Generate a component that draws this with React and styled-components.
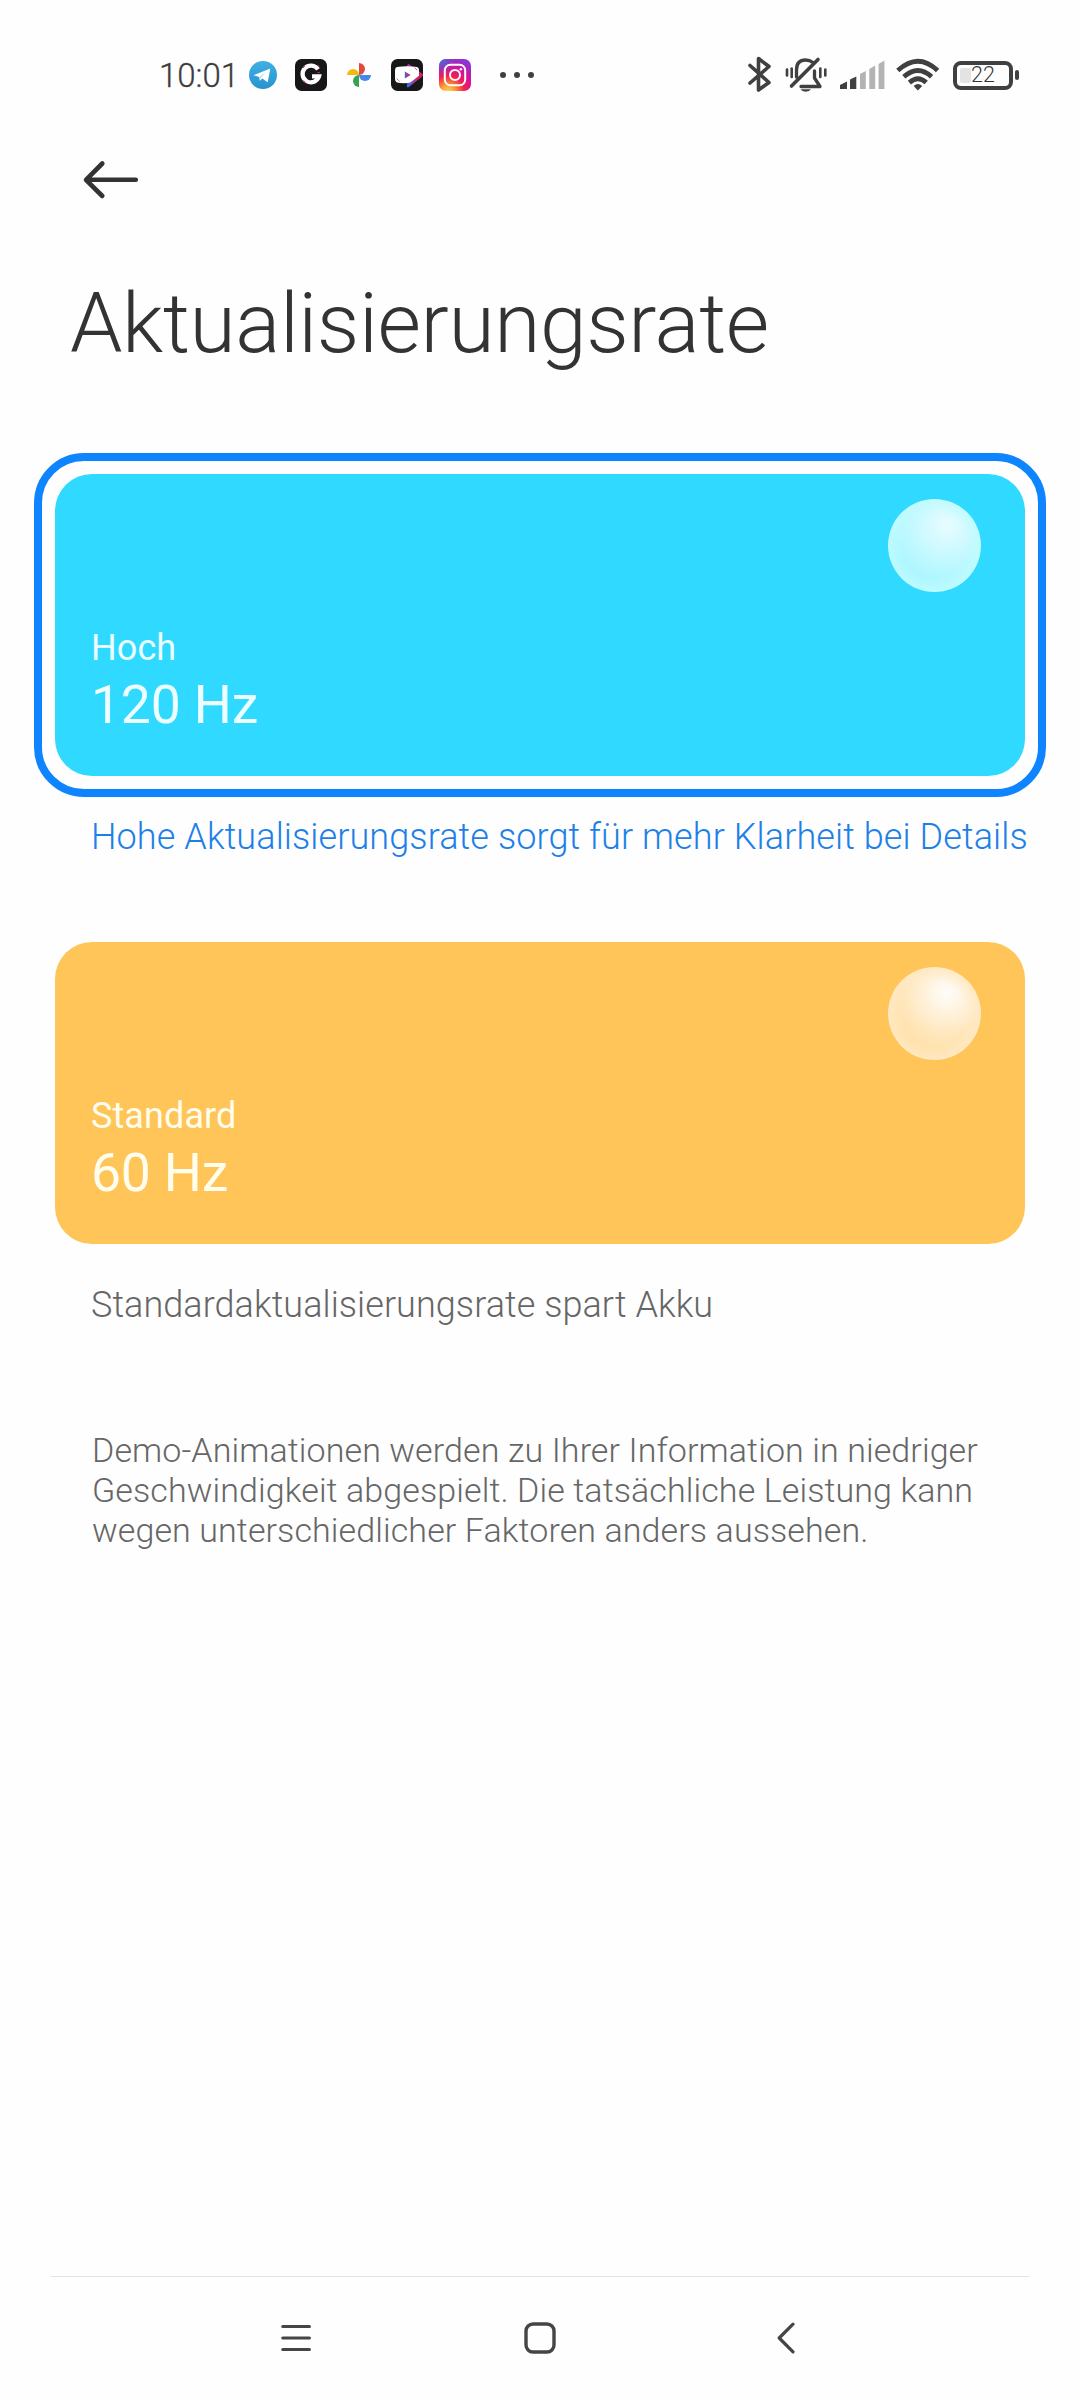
import React from "react";
import styled, { createGlobalStyle } from "styled-components";

const GlobalStyle = createGlobalStyle`
  body { margin: 0; background: #fefefe; }
  * { box-sizing: border-box; }
  svg { display: block; flex: none; }
`;

const Screen = styled.div`
  width: 1080px;
  height: 2400px;
  display: flex;
  flex-direction: column;
  background: #fefefe;
  font-family: Roboto, "Noto Sans", sans-serif;
  color: #333;
  overflow: hidden;
`;

const StatusBar = styled.div`
  height: 150px;
  padding: 0 61px 0 159px;
  display: flex;
  align-items: center;
  justify-content: space-between;
`;

const StatusGroup = styled.div`
  display: flex;
  align-items: center;
`;

const Clock = styled.span`
  width: 88px;
  padding-top: 1px;
  font-size: 33px;
  line-height: 40px;
  font-weight: 300;
  color: #3c3c3c;
  -webkit-text-stroke: 0.3px #3c3c3c;
  white-space: nowrap;
`;

const AppIcons = styled.div`
  display: flex;
  gap: 16px;
  align-items: center;
`;

const BatteryShell = styled.div`
  width: 60px;
  height: 29px;
  margin-left: 14px;
  border: 4px solid #404040;
  border-radius: 8px;
  display: flex;
  align-items: center;
  padding-left: 3px;
`;

const BatteryFill = styled.span`
  width: 11px;
  height: 15px;
  border-radius: 2px;
  background: #e3e3e3;
`;

const BatteryText = styled.span`
  font-size: 21.5px;
  line-height: 22px;
  font-weight: 300;
  color: #333;
`;

const BatteryNub = styled.span`
  width: 4px;
  height: 10px;
  margin-left: 2px;
  border-radius: 2px;
  background: #404040;
`;

const Toolbar = styled.div`
  height: 60px;
  padding-left: 81px;
  display: flex;
  align-items: center;
`;

const Title = styled.h1`
  margin: 64px 0 79px;
  padding-left: 70px;
  font-size: 84px;
  line-height: 100px;
  font-weight: 300;
  letter-spacing: -0.4px;
  white-space: nowrap;
`;

const Options = styled.div`
  padding: 0 34px;
  display: flex;
  flex-direction: column;
  gap: 63px;
`;

const Ring = styled.div`
  padding: 13px;
  border: 8px solid ${(p) => (p.$selected ? "#0f84ff" : "transparent")};
  border-radius: 50px;
`;

const Card = styled.div`
  height: 302px;
  padding: 25px 44px 40px 36px;
  border-radius: 37px;
  background: ${(p) => p.$color};
  display: flex;
  justify-content: space-between;
`;

const CardText = styled.div`
  display: flex;
  flex-direction: column;
  justify-content: flex-end;
  gap: 5px;
  color: ${(p) => p.$color};
`;

const CardName = styled.span`
  font-size: 36px;
  line-height: 42px;
  letter-spacing: 0.1px;
`;

const CardRate = styled.span`
  font-size: 53.5px;
  line-height: 62px;
  letter-spacing: -0.2px;
`;

const Ball = styled.div`
  width: 93px;
  height: 93px;
  border-radius: 50%;
  background:
    radial-gradient(circle at 50% 50%, transparent 50%, ${(p) => p.$edge} 72%) center / 100% 100%,
    radial-gradient(circle at 63% 28%, ${(p) => p.$light} 0, ${(p) => p.$mid} 45px, ${(p) => p.$base} 66px);
`;

const Caption = styled.div`
  margin: 19px 0 0 57px;
  font-size: 36px;
  line-height: 42px;
  font-weight: 300;
  letter-spacing: ${(p) => (p.$selected ? "0.1px" : "0.06px")};
  white-space: nowrap;
  color: ${(p) => (p.$selected ? "#1d80e8" : "#666")};
`;

const Note = styled.p`
  margin: 104px 60px 0 92px;
  font-size: 34px;
  line-height: 40px;
  font-weight: 300;
  letter-spacing: 0.1px;
  color: #666;
  white-space: nowrap;
`;

const NavBar = styled.nav`
  margin: auto 51px 0;
  height: 124px;
  border-top: 1px solid #e3e3e3;
  padding: 0 225px 1px 229px;
  display: flex;
  align-items: center;
  justify-content: space-between;
`;

const TelegramIcon = () => (
  <svg width="32" height="32" viewBox="0 0 32 32">
    <defs>
      <linearGradient id="tg" x1="0" y1="0" x2="0" y2="1">
        <stop offset="0" stopColor="#3fb0e4" />
        <stop offset="1" stopColor="#2793cf" />
      </linearGradient>
    </defs>
    <circle cx="16" cy="16" r="14" fill="url(#tg)" />
    <path d="M6.5 16.2 L23.3 9.5 L20.7 23.2 L15.3 19.4 L12.9 21.8 L12.2 18 Z" fill="#fff" />
    <path d="M12.3 18 L19.8 12.6 L14 18.6 L12.9 21.8 Z" fill="#b9dff2" />
  </svg>
);

const GIcon = () => (
  <svg width="32" height="32" viewBox="0 0 32 32">
    <rect width="32" height="32" rx="6.5" fill="#17171a" />
    <path d="M23 10.4 A8.4 8.4 0 1 0 24 17.4 L17 17.4" fill="none" stroke="#fff" strokeWidth="4.2" />
    <path d="M8 8.8 L9.8 7.2 M22.6 5.8 L24.6 8.2 M8.2 21.4 L11.4 24.8 M22 13.6 h3" stroke="#b3245f" strokeWidth="1" />
  </svg>
);

const PhotosIcon = () => (
  <svg width="32" height="32" viewBox="0 0 32 32">
    <path d="M16 16 V4 A6 6 0 0 1 16 16 Z" fill="#e04a3b" />
    <path d="M16 16 H28 A6 6 0 0 1 16 16 Z" fill="#4387f0" />
    <path d="M16 16 V28 A6 6 0 0 1 16 16 Z" fill="#36a353" />
    <path d="M16 16 H4 A6 6 0 0 1 16 16 Z" fill="#f6b90c" />
  </svg>
);

const VideoIcon = () => (
  <svg width="32" height="32" viewBox="0 0 32 32">
    <defs>
      <linearGradient id="vt" x1="1" y1="0" x2="0" y2="1">
        <stop offset="0" stopColor="#f0124a" />
        <stop offset="1" stopColor="#3a6cf0" />
      </linearGradient>
      <linearGradient id="vp" x1="0" y1="0" x2="1" y2="0">
        <stop offset="0" stopColor="#5560d0" />
        <stop offset="1" stopColor="#e8124a" />
      </linearGradient>
    </defs>
    <rect width="32" height="32" rx="6.5" fill="#17171a" />
    <path d="M16.5 6 L30.5 16 L16.5 26" fill="none" stroke="url(#vt)" strokeWidth="3" strokeLinejoin="round" />
    <path d="M6 8 Q16 6.4 26 8 Q28 8.4 28 11 L28 17 L20.5 23.6 Q12 25 6 23.6 Q4 23 4 20 L4 12 Q4 8.6 6 8 Z" fill="#fff" />
    <path d="M17 27 L28.5 18" stroke="url(#vt)" strokeWidth="2.6" strokeLinecap="round" />
    <path d="M13.8 12.4 L19.6 15.9 L13.8 19.4 Z" fill="url(#vp)" />
    <path d="M5.6 19.6 L8.6 22.4 M23.6 8.6 L26.4 11.4" stroke="#e0386a" strokeWidth="0.8" />
  </svg>
);

const InstagramIcon = () => (
  <svg width="32" height="32" viewBox="0 0 32 32">
    <defs>
      <radialGradient id="ig" cx="0.28" cy="1.05" r="1.1">
        <stop offset="0" stopColor="#ffe070" />
        <stop offset="0.22" stopColor="#fd9a30" />
        <stop offset="0.48" stopColor="#f2204f" />
        <stop offset="0.72" stopColor="#d312a0" />
        <stop offset="1" stopColor="#8a35d0" />
      </radialGradient>
      <radialGradient id="igb" cx="0.02" cy="0" r="0.55">
        <stop offset="0" stopColor="#3b70dc" />
        <stop offset="0.35" stopColor="#5a5cd4" stopOpacity="0.85" />
        <stop offset="1" stopColor="#9a35c0" stopOpacity="0" />
      </radialGradient>
    </defs>
    <rect width="32" height="32" rx="7" fill="url(#ig)" />
    <rect width="32" height="32" rx="7" fill="url(#igb)" />
    <rect x="5.8" y="5.8" width="20.4" height="20.4" rx="5.5" fill="none" stroke="#fff" strokeWidth="2" />
    <circle cx="16" cy="16" r="5" fill="none" stroke="#fff" strokeWidth="2" />
    <circle cx="21.9" cy="10.2" r="1.3" fill="#fff" />
  </svg>
);

const MoreDots = styled(({ className }) => (
  <svg className={className} width="34" height="8" viewBox="0 0 34 8" fill="#404040">
    <circle cx="3" cy="4" r="3" />
    <circle cx="17" cy="4" r="3" />
    <circle cx="31" cy="4" r="3" />
  </svg>
))`
  margin-left: 29px;
`;

const SystemIcons = () => (
  <svg width="192" height="40" viewBox="747 55 192 40" fill="none" stroke="#404040" strokeLinecap="round" strokeLinejoin="round">
    <path d="M750 65.5 L769 82.5 L758.5 90 V58.5 L769 66.5 L750 83" strokeWidth="3.6" />
    <g strokeWidth="3.3">
      <path d="M796.5 77 V70 C796.5 63 800 60 805.5 60 C809 60 811 61 813 62.5" />
      <path d="M814.5 71 V78 L820 86.5 H801" />
      <path d="M791.5 86 L818 59.5" strokeWidth="3.6" />
      <path d="M787 69.5 V75.5" strokeWidth="2.6" />
      <path d="M791.7 68.5 V77" strokeWidth="2.6" />
      <path d="M820.3 68.5 V77" strokeWidth="2.6" />
      <path d="M825.3 69.5 V75.5" strokeWidth="2.6" />
    </g>
    <path d="M800.5 89.3 H811 A5.6 3.6 0 0 1 800.5 89.3 Z" fill="#404040" stroke="none" />
    <g stroke="none">
      <path d="M840 89 V85 L847 81.5 V89 Z" fill="#404040" />
      <path d="M850 89 V79.5 L856.3 76.5 V89 Z" fill="#404040" />
      <path d="M860 89 V74 L865.8 71 V89 Z" fill="#b3b3b3" />
      <path d="M869.3 89 V69 L875.2 65.5 V89 Z" fill="#b3b3b3" />
      <path d="M878.6 89 V64 L884.4 60.5 V89 Z" fill="#b3b3b3" />
    </g>
    <g strokeWidth="4.8" strokeLinecap="butt">
      <path d="M897.8 70.6 Q918 52 937.6 70.6" />
      <path d="M903.8 76.8 Q918 64.2 931.6 76.8" />
      <path d="M909.4 82.6 Q918 75 926.2 82.6" />
    </g>
    <path d="M913.6 86 Q918 82 922.2 86 L917.9 90.4 Z" fill="#404040" stroke="none" />
  </svg>
);

const BackArrow = () => (
  <svg width="60" height="44" viewBox="81 158 60 44" fill="none" stroke="#333" strokeWidth="4.6" strokeLinecap="round" strokeLinejoin="round">
    <path d="M135.8 179.8 H86.5 M102.3 163.5 L86 179.8 L102.3 196" />
  </svg>
);

const RecentsIcon = () => (
  <svg width="32" height="32" viewBox="0 0 32 32" stroke="#454545" strokeWidth="3.2" strokeLinecap="round">
    <path d="M2.8 4.5 H29.4 M2.8 16 H29.4 M2.8 27.5 H29.4" />
  </svg>
);

const HomeIcon = () => (
  <svg width="32" height="32" viewBox="0 0 32 32" fill="none" stroke="#454545" strokeWidth="3.4">
    <rect x="2" y="2" width="28" height="28" rx="7" />
  </svg>
);

const NavBackIcon = () => (
  <svg width="36" height="32" viewBox="-8 0 36 32" fill="none" stroke="#454545" strokeWidth="3.2" strokeLinecap="round" strokeLinejoin="round">
    <path d="M17 2.2 L3.2 16 L17 29.8" />
  </svg>
);

const RATES = [
  {
    name: "Hoch",
    rate: "120 Hz",
    caption: "Hohe Aktualisierungsrate sorgt für mehr Klarheit bei Details",
    color: "#2fd9ff",
    text: "#ecfeff",
    selected: true,
    ball: { $light: "#e8fcff", $mid: "#b9f8ff", $base: "#a6f5ff", $edge: "#c0fcff" },
  },
  {
    name: "Standard",
    rate: "60 Hz",
    caption: "Standardaktualisierungsrate spart Akku",
    color: "#ffc558",
    text: "#fffdee",
    selected: false,
    ball: { $light: "#fefdfb", $mid: "#ffe5b8", $base: "#ffdfa6", $edge: "#ffe9c4" },
  },
];

export default function App() {
  return (
    <>
      <GlobalStyle />
      <Screen>
        <StatusBar>
          <StatusGroup>
            <Clock>10:01</Clock>
            <AppIcons>
              <TelegramIcon />
              <GIcon />
              <PhotosIcon />
              <VideoIcon />
              <InstagramIcon />
            </AppIcons>
            <MoreDots />
          </StatusGroup>
          <StatusGroup>
            <SystemIcons />
            <BatteryShell>
              <BatteryFill />
              <BatteryText>22</BatteryText>
            </BatteryShell>
            <BatteryNub />
          </StatusGroup>
        </StatusBar>
        <Toolbar>
          <BackArrow />
        </Toolbar>
        <Title>Aktualisierungsrate</Title>
        <Options>
          {RATES.map((r) => (
            <div key={r.rate}>
              <Ring $selected={r.selected}>
                <Card $color={r.color}>
                  <CardText $color={r.text}>
                    <CardName>{r.name}</CardName>
                    <CardRate>{r.rate}</CardRate>
                  </CardText>
                  <Ball {...r.ball} />
                </Card>
              </Ring>
              <Caption $selected={r.selected}>{r.caption}</Caption>
            </div>
          ))}
        </Options>
        <Note>
          Demo-Animationen werden zu Ihrer Information in niedriger
          <br />
          Geschwindigkeit abgespielt. Die tatsächliche Leistung kann
          <br />
          wegen unterschiedlicher Faktoren anders aussehen.
        </Note>
        <NavBar>
          <RecentsIcon />
          <HomeIcon />
          <NavBackIcon />
        </NavBar>
      </Screen>
    </>
  );
}
